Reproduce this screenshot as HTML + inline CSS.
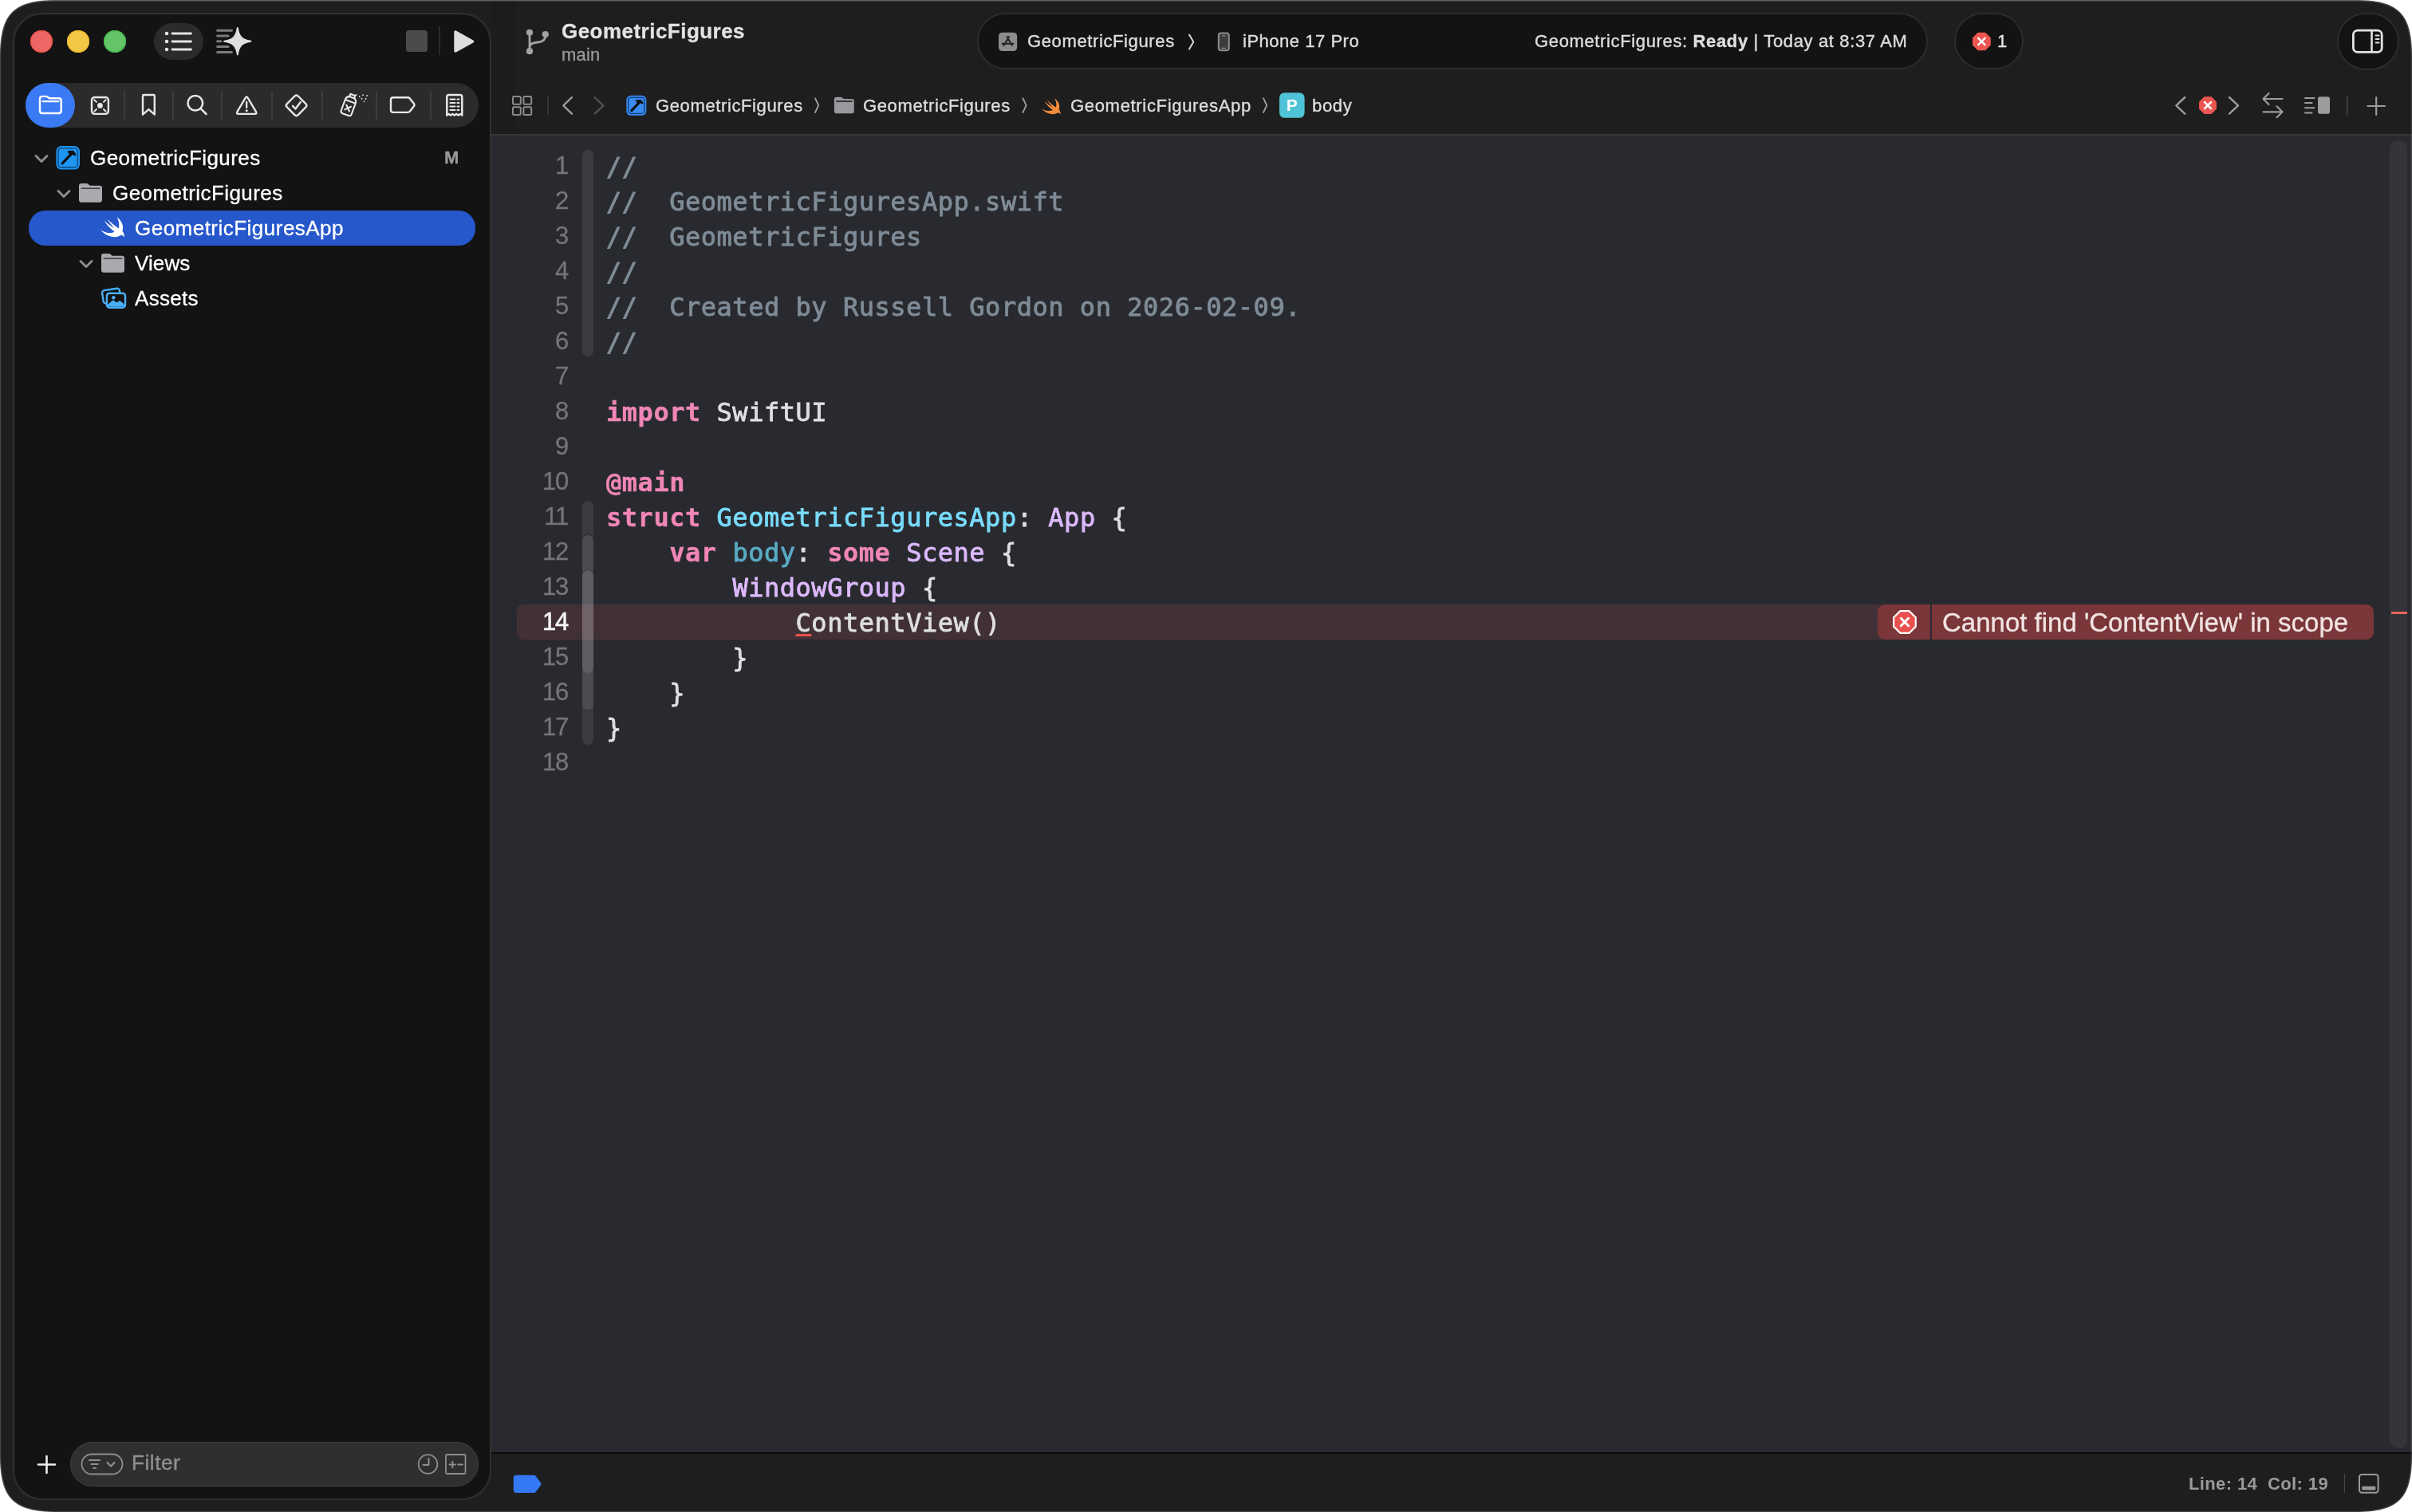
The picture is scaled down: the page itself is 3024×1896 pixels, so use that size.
<!DOCTYPE html>
<html lang="en">
<head>
<meta charset="utf-8">
<title>GeometricFigures — GeometricFiguresApp.swift</title>
<style>
*{box-sizing:border-box;margin:0;padding:0}
html,body{width:3024px;height:1896px;overflow:hidden;background:#fff}
body{font-family:"Liberation Sans",sans-serif;color:#fff;position:relative}
#win>*{position:absolute}
#win{position:absolute;left:0;top:0;width:3024px;height:1896px;background:#1e1e1e;overflow:hidden;clip-path:path('M72 0H2952C3007.4 0 3024 16.6 3024 72V1824C3024 1879.4 3007.4 1896 2952 1896H72C16.6 1896 0 1879.4 0 1824V72C0 16.6 16.6 0 72 0Z')}
svg{overflow:visible}
.t{white-space:pre;line-height:40px;height:40px;-webkit-text-stroke:.3px}
.t,.cl,.ln{will-change:transform}
/* sidebar */
#side{left:16px;top:16px;width:600px;height:1865px;border-radius:37px;background:#131313;border:2px solid #303030}
#sideshadow{left:616px;top:0;width:30px;height:1821px;background:rgba(0,0,0,.05)}
/* editor */
#edline{left:616px;top:168px;width:2408px;height:2px;background:#363637}
#editor{left:616px;top:170px;width:2408px;height:1651px;background:#292a2f}
#edbot{left:616px;top:1821px;width:2408px;height:2px;background:#0c0c0c}
.ln{-webkit-text-stroke:.3px;font-family:"Liberation Sans",sans-serif;font-size:31px;letter-spacing:-1.25px;color:#74747a;text-align:right;width:80px;left:632.4px;height:44px;line-height:44px;white-space:pre}
.cl{font-family:"DejaVu Sans Mono","Liberation Mono",monospace;font-size:32px;letter-spacing:.53px;left:760px;height:44px;line-height:44px;white-space:pre;color:#dfdfe0;-webkit-text-stroke:.85px}
.c{color:#7f8c98}.k{color:#f086b8;font-weight:bold;-webkit-text-stroke:.35px}.d{color:#78dcfc}.o{color:#5aaac6}.y{color:#dcb9fc}
.ln.cur{color:#f4f4f4;-webkit-text-stroke:.5px}
.u{text-decoration:underline;text-decoration-color:#e8504d;text-decoration-thickness:2.500px;text-underline-offset:2.5px}
.rib{left:730px;width:14px;border-radius:7px}
.pill{border-radius:40px;background:#131313;border:2px solid #2c2c2c}
.jb{font-size:22px;letter-spacing:.62px;color:#dcdcdc;top:112.7px;-webkit-text-stroke:.38px}
.st{font-size:22px;letter-spacing:.62px;color:#dedede;top:32.3px;-webkit-text-stroke:.38px}
.nd{top:114px;width:1.5px;height:36px;background:#3d3d3d}
.row{font-size:26px;letter-spacing:.44px;color:#fff}
</style>
</head>
<body>
<div id="win">

<!-- ======= TOOLBAR (right of sidebar) ======= -->
<div id="sideshadow"></div>
<div id="toolbar" style="left:616px;top:0;width:2408px;height:168px"></div>
<!-- branch + title -->
<svg style="left:656px;top:34px" width="36" height="38" viewBox="656 34 36 38" fill="none" stroke="#a2a2a2" stroke-width="2.800" stroke-linecap="round"><path d="M664 41V64M683.800 44Q683.800 51.500 676.500 52.600L670.500 53.500Q664 54.500 664 60"/><g fill="#a2a2a2" stroke="none"><circle cx="664" cy="40.800" r="4.100"/><circle cx="664" cy="64.200" r="4.100"/><circle cx="683.800" cy="43" r="4.100"/></g></svg>
<div class="t" style="left:704px;top:19px;font-size:26px;font-weight:700;letter-spacing:.47px;color:#e2e2e2">GeometricFigures</div>
<div class="t" style="left:704px;top:48.6px;font-size:22px;letter-spacing:.2px;color:#9a9a9a">main</div>

<!-- status pill -->
<div class="pill" style="left:1225px;top:16px;width:1192px;height:71px"></div>
<svg style="left:1250px;top:38px" width="300" height="30" viewBox="1250 38 300 30" fill="none">
<rect x="1252" y="40.800" width="23.200" height="23.200" rx="4.500" fill="#8c8c8c"/>
<g stroke="#1f1f1f" stroke-width="1.900" stroke-linecap="round"><path d="M1262.600 46L1268.800 57M1265 46L1258.500 57M1256.600 54.800H1270.600"/></g>
<path d="M1491 43.500L1496.300 52.500L1491 61.500" stroke="#d6d6d6" stroke-width="2" stroke-linecap="round" stroke-linejoin="round"/>
<rect x="1527.800" y="41.500" width="13" height="21.800" rx="3" fill="#3c3c3c" stroke="#8c8c8c" stroke-width="2"/><path d="M1532.500 44.800H1536M1532 60.300H1536.500" stroke="#8c8c8c" stroke-width="1.300" stroke-linecap="round"/>
</svg>
<div class="t st" style="left:1288px">GeometricFigures</div>
<div class="t st" style="left:1557.500px;letter-spacing:.52px">iPhone 17 Pro</div>
<div class="t st" style="left:1923.500px;letter-spacing:.64px"><span>GeometricFigures: </span><b>Ready</b><span> | Today at 8:37 AM</span></div>

<!-- error count pill -->
<div class="pill" style="left:2450px;top:16px;width:87px;height:71px"></div>
<svg style="left:2470px;top:38px" width="30" height="30" viewBox="2470 38 30 30"><path d="M2479.900 41.300H2488.900L2495.200 47.600V56.400L2488.900 62.700H2479.900L2473.600 56.400V47.600Z" fill="#ec5550" stroke="#ec5550" stroke-width="1.200" stroke-linejoin="round"/><path d="M2480.300 47.900L2488.500 56.100M2488.500 47.900L2480.300 56.100" stroke="#fff" stroke-width="2.500" stroke-linecap="round"/></svg>
<div class="t st" style="left:2504px;color:#e6e6e6">1</div>

<!-- inspector toggle -->
<div class="pill" style="left:2930px;top:16px;width:78px;height:72px"></div>
<svg style="left:2946px;top:34px" width="44" height="36" viewBox="2946 34 44 36" fill="none" stroke="#e2e2e2" stroke-width="2.800" stroke-linecap="round"><rect x="2950.400" y="38.200" width="35.800" height="27.200" rx="5.500"/><path d="M2973.500 38.500V65" stroke-width="2.600"/><path d="M2978.600 44.500H2982.600M2978.600 49H2982.600M2978.600 53.500H2982.600" stroke-width="1.900"/></svg>

<!-- ======= JUMP BAR ======= -->
<svg style="left:636px;top:112px" width="1080" height="42" viewBox="636 112 1080 42" fill="none" stroke-linecap="round" stroke-linejoin="round">
<g stroke="#8b8b8b" stroke-width="2"><rect x="643" y="121" width="9.800" height="9.800" rx="1.500"/><rect x="656.400" y="121" width="9.800" height="9.800" rx="1.500"/><rect x="643" y="134.200" width="9.800" height="9.800" rx="1.500"/><rect x="656.400" y="134.200" width="9.800" height="9.800" rx="1.500"/></g>
<path d="M687 120.500V143.500" stroke="#3a3a3a" stroke-width="1.600"/>
<path d="M717 122L706.300 132.300L717 142.600" stroke="#9c9c9c" stroke-width="2.400"/>
<path d="M745.600 122L756.300 132.300L745.600 142.600" stroke="#4f4f4f" stroke-width="2.400"/>
<!-- project icon -->
<rect x="785.300" y="119.800" width="25" height="25" rx="5.500" fill="#3a8cf3" stroke="none"/><rect x="787.700" y="122.200" width="20.200" height="20.200" rx="3.500" stroke="#123e7a" stroke-width="1.400"/>
<path d="M791.800 138.600L800.600 129.400" stroke="#111" stroke-width="3"/><path d="M797.300 125.800L802.700 125.400Q804 125.500 804.600 126.500L806.300 129.600L804.200 130.200L802.700 128.400L800.600 131Z" fill="#111" stroke="#111" stroke-width=".8"/>
<!-- separators -->
<g stroke="#a4a4a4" stroke-width="1.800"><path d="M1022 123.200L1026.200 132.100L1022 141"/><path d="M1282.400 123.200L1286.600 132.100L1282.400 141"/><path d="M1584 123.200L1588.200 132.100L1584 141"/></g>
<!-- folder -->
<g><path fill="#98989d" stroke="none" d="M1045.9 124.37Q1045.9 121.8 1048.47 121.8H1053.88Q1055.17 121.8 1056.02 122.66L1056.71 123.34Q1057.48 124.03 1058.77 124.03H1068.21Q1070.78 124.03 1070.78 126.6V139.56Q1070.78 142.13 1068.21 142.13H1048.47Q1045.9 142.13 1045.9 139.56Z"/><path d="M1048.22 127.03H1068.47" stroke="#1e1e1e" stroke-width="1.6" stroke-linecap="butt"/></g>
<!-- swift -->
<path transform="translate(1306.300 122) scale(1.040)" fill="#f08a3c" stroke="none" d="M15.300 1.200C19.800 4.400 22.300 9.800 20.600 14.600C22.400 17 22.700 19.300 22.300 20.600C21 18.300 19.100 18.500 17.700 19.200C13.500 21.400 7.300 20.600 2.200 16.200C1.300 15.400 0.500 14.500 0 13.600C2.600 15.300 5.600 16.500 8.700 16.400C10.200 16.400 11.700 16.100 13 15.400C9 12.400 5.600 8.600 2.900 4.700C6 7.400 9.400 9.900 12.900 12C10.500 9.400 7.900 6.300 5.900 3.200C9.200 6.300 13.100 9.600 17 12.100C17.900 8.700 17.300 4.700 15.300 1.200Z"/>
<!-- P badge -->
<rect x="1604" y="116.200" width="31.600" height="31.600" rx="6.500" fill="#50c3d8" stroke="none"/>
</svg>
<div class="t" style="left:1604px;top:112px;width:31.600px;text-align:center;font-size:21px;font-weight:700;-webkit-text-stroke:0;color:#fff">P</div>
<div class="t jb" style="left:821.800px">GeometricFigures</div>
<div class="t jb" style="left:1081.800px">GeometricFigures</div>
<div class="t jb" style="left:1341.800px;letter-spacing:.68px">GeometricFiguresApp</div>
<div class="t jb" style="left:1644.500px;letter-spacing:.7px">body</div>

<!-- jump bar right -->
<svg style="left:2716px;top:110px" width="290" height="44" viewBox="2716 110 290 44" fill="none" stroke="#9c9c9c" stroke-width="2.400" stroke-linecap="round" stroke-linejoin="round">
<path d="M2739.300 122L2728.300 132.300L2739.300 142.600"/><path d="M2795 122L2806 132.300L2795 142.600"/>
<path d="M2763.700 121.800H2772.300L2778.300 127.800V136.400L2772.300 142.400H2763.700L2757.700 136.400V127.800Z" fill="#ec5550" stroke="#ec5550" stroke-width="1.200"/><path d="M2764 128.100L2772 136.100M2772 128.100L2764 136.100" stroke="#fff" stroke-width="2.600"/>
<g stroke-width="2.200"><path d="M2861.500 124H2837.500M2844.500 117L2837.500 124L2844.500 131"/><path d="M2837.500 140.300H2861.500M2854.500 133.300L2861.500 140.300L2854.500 147.300"/></g>
<g stroke-width="2"><path d="M2890 123H2901.500M2890 129H2898.500M2890 135.300H2901.500M2890 141.500H2898.500"/></g><rect x="2906" y="121.300" width="15" height="21.400" rx="2.800" fill="#9c9c9c" stroke="none"/>
<path d="M2942.700 120.500V144" stroke="#454545" stroke-width="1.600"/>
<path d="M2968.500 133H2990M2979.200 122V144" stroke-width="2.200"/>
</svg>

<!-- ======= EDITOR ======= -->
<div id="edline"></div>
<div id="editor"></div>
<div id="edbot"></div>
<!-- line 14 highlight + issue -->
<div style="left:648px;top:758px;width:2320px;height:44px;border-radius:8px 0 0 8px;background:#413136"></div>
<!-- fold ribbons -->
<div class="rib" style="top:188px;height:259px;background:#3b3c41"></div>
<div class="rib" style="top:628px;height:306px;background:#3b3c41"></div>
<div class="rib" style="top:671px;height:219px;background:#4c4d52;box-shadow:0 -1.500px 0 0 #2f3035"></div>
<div class="rib" style="top:715px;height:129px;background:#5d5e63;box-shadow:0 -1.500px 0 0 #3a3b40"></div>
<div style="left:730px;top:758px;width:14px;height:44px;background:#70646a"></div>
<div class="ln" style="top:185.6px">1</div><div class="cl" style="top:187px"><span class="c">//</span></div>
<div class="ln" style="top:229.6px">2</div><div class="cl" style="top:231px"><span class="c">//  GeometricFiguresApp.swift</span></div>
<div class="ln" style="top:273.6px">3</div><div class="cl" style="top:275px"><span class="c">//  GeometricFigures</span></div>
<div class="ln" style="top:317.6px">4</div><div class="cl" style="top:319px"><span class="c">//</span></div>
<div class="ln" style="top:361.6px">5</div><div class="cl" style="top:363px"><span class="c">//  Created by Russell Gordon on 2026-02-09.</span></div>
<div class="ln" style="top:405.6px">6</div><div class="cl" style="top:407px"><span class="c">//</span></div>
<div class="ln" style="top:449.6px">7</div><div class="cl" style="top:451px"></div>
<div class="ln" style="top:493.6px">8</div><div class="cl" style="top:495px"><span class="k">import</span> SwiftUI</div>
<div class="ln" style="top:537.6px">9</div><div class="cl" style="top:539px"></div>
<div class="ln" style="top:581.6px">10</div><div class="cl" style="top:583px"><span class="k">@main</span></div>
<div class="ln" style="top:625.6px">11</div><div class="cl" style="top:627px"><span class="k">struct</span> <span class="d">GeometricFiguresApp</span>: <span class="y">App</span> {</div>
<div class="ln" style="top:669.6px">12</div><div class="cl" style="top:671px">    <span class="k">var</span> <span class="o">body</span>: <span class="k">some</span> <span class="y">Scene</span> {</div>
<div class="ln" style="top:713.6px">13</div><div class="cl" style="top:715px">        <span class="y">WindowGroup</span> {</div>
<div class="ln cur" style="top:757.6px">14</div><div class="cl" style="top:759px">            <span class="u">C</span>ontentView()</div>
<div class="ln" style="top:801.6px">15</div><div class="cl" style="top:803px">        }</div>
<div class="ln" style="top:845.6px">16</div><div class="cl" style="top:847px">    }</div>
<div class="ln" style="top:889.6px">17</div><div class="cl" style="top:891px">}</div>
<div class="ln" style="top:933.6px">18</div><div class="cl" style="top:935px"></div>
<!-- issue badge -->
<div style="left:2354px;top:758px;width:622px;height:44px;border-radius:9px;background:#7a3638"></div>
<div style="left:2420px;top:758px;width:2px;height:44px;background:#2a2a30"></div>
<svg style="left:2370px;top:762px" width="36" height="36" viewBox="2370 762 36 36"><path d="M2382.300 766.200H2393.700L2401.800 774.300V785.700L2393.700 793.800H2382.300L2374.200 785.700V774.300Z" fill="#e9514f" stroke="#fff" stroke-width="2.200" stroke-linejoin="round"/><path d="M2383.300 775.300L2392.700 784.700M2392.700 775.300L2383.300 784.700" stroke="#fff" stroke-width="3" stroke-linecap="round"/></svg>
<div class="t" style="left:2435px;top:760.5px;font-size:33px;color:#f1e3e3;letter-spacing:0">Cannot find 'ContentView' in scope</div>
<!-- scroller -->
<div style="left:2996px;top:176px;width:22px;height:1640px;border-radius:11px;background:#34353a"></div>
<div style="left:2998px;top:767px;width:20px;height:3px;background:#e7665c"></div>

<!-- ======= bottom bar ======= -->
<svg style="left:640px;top:1846px" width="44" height="30" viewBox="640 1846 44 30"><path d="M647.200 1849.800H669.300Q670.800 1849.800 671.700 1851L678 1859.400Q679 1860.900 678 1862.400L671.700 1870.800Q670.800 1872 669.300 1872H647.200Q643.800 1872 643.800 1868.600V1853.200Q643.800 1849.800 647.200 1849.800Z" fill="#3478f6"/></svg>
<div class="t" style="left:2744px;top:1840.5px;font-size:22px;font-weight:700;letter-spacing:.37px;-webkit-text-stroke:0;color:#9a9a9a">Line: 14  Col: 19</div>
<div style="left:2938.500px;top:1848px;width:1.600px;height:24px;background:#484848"></div>
<svg style="left:2954px;top:1844px" width="32" height="32" viewBox="2954 1844 32 32" fill="none"><rect x="2958" y="1849" width="23.600" height="22.800" rx="3.200" stroke="#9a9a9a" stroke-width="2"/><rect x="2961.300" y="1863.800" width="17" height="4.800" rx="1" fill="#9a9a9a"/></svg>


<!-- ======= SIDEBAR ======= -->
<div id="side"></div>

<!-- traffic lights -->
<div style="left:38px;top:38px;width:28px;height:28px;border-radius:50%;background:#ec6765;box-shadow:inset 0 0 0 1.200px #ee4f49"></div>
<div style="left:84px;top:38px;width:28px;height:28px;border-radius:50%;background:#f3c846;box-shadow:inset 0 0 0 1.200px #ecb928"></div>
<div style="left:130px;top:38px;width:28px;height:28px;border-radius:50%;background:#63c567;box-shadow:inset 0 0 0 1.200px #40b649"></div>

<!-- list button -->
<div style="left:193px;top:29px;width:62px;height:46px;border-radius:23px;background:#2b2b2b"></div>
<svg style="left:193px;top:29px" width="62" height="46" viewBox="193 29 62 46" fill="none" stroke="#e4e4e4" stroke-width="2.8" stroke-linecap="round">
<path d="M216 42H239.5M216 52H239.5M216 62H239.5"/>
<g fill="#e4e4e4" stroke="none"><circle cx="209" cy="42" r="2.3"/><circle cx="209" cy="52" r="2.3"/><circle cx="209" cy="62" r="2.3"/></g>
</svg>
<!-- sparkle list -->
<svg style="left:268px;top:30px" width="52" height="44" viewBox="268 30 52 44" fill="none">
<path d="M272.600 38.300H290.500M272.600 44.900H286.100M272.600 51.700H276.700M272.600 58.500H286.100M272.600 65.400H290.500" stroke="#7c7c7c" stroke-width="3" stroke-linecap="round"/>
<path transform="translate(297.800 51.700)" d="M0 -16.700C1.700 -5.400 5.400 -1.700 16.700 0C5.400 1.700 1.700 5.400 0 16.700C-1.700 5.400 -5.400 1.700 -16.700 0C-5.400 -1.700 -1.700 -5.400 0 -16.700Z" fill="#dedede" stroke="#dedede" stroke-width="2" stroke-linejoin="round"/>
</svg>
<!-- stop / play -->
<div style="left:509px;top:38px;width:27px;height:27px;border-radius:3.5px;background:#4b4b4b"></div>
<div style="left:550px;top:33px;width:1.5px;height:36px;background:#2b2b2b"></div>
<svg style="left:566px;top:34px" width="32" height="36" viewBox="566 34 32 36"><path d="M571 40V64L592.5 52Z" fill="#dedede" stroke="#dedede" stroke-width="3.4" stroke-linejoin="round"/></svg>

<!-- navigator selector -->
<div style="left:32px;top:104px;width:568px;height:56px;border-radius:28px;background:#2b2b2b"></div>
<div style="left:32px;top:104px;width:62px;height:56px;border-radius:28px;background:#3a7bf5"></div>
<div class="nd" style="left:155px"></div><div class="nd" style="left:216px"></div><div class="nd" style="left:277px"></div><div class="nd" style="left:340px"></div><div class="nd" style="left:403px"></div><div class="nd" style="left:471px"></div><div class="nd" style="left:539px"></div>
<svg style="left:32px;top:104px" width="568" height="56" viewBox="32 104 568 56" fill="none" stroke="#e8e8e8" stroke-width="2.5" stroke-linecap="round" stroke-linejoin="round">
<!-- folder -->
<g stroke="#fff" stroke-width="2.400"><path d="M50 125.400V139Q50 142 53 142H73.700Q76.700 142 76.700 139V126.200Q76.700 123.200 73.700 123.200H61.800L59.400 121.500Q58.500 120.900 57.300 120.900H53Q50 120.900 50 123.900Z"/><path d="M53.400 127.100H73.400" stroke-width="2.200"/></g>
<!-- x square -->
<rect x="115" y="122" width="20.900" height="20.900" rx="3.600" stroke-width="2.400"/><path d="M118.300 125.300L120.900 127.900M132.600 125.300L130 127.900M118.300 139.600L120.900 137M132.600 139.600L130 137" stroke-width="2"/><circle cx="125.450" cy="132.450" r="3.400" fill="#e8e8e8" stroke="none"/>
<!-- bookmark -->
<path d="M180.200 119H192.600Q193.800 119 193.800 120.200V143.600L186.400 137.100L179 143.600V120.200Q179 119 180.200 119Z" stroke-width="2.400"/>
<!-- search -->
<circle cx="244.800" cy="129.300" r="9.300"/><path d="M251.800 136.300L258.500 143"/>
<!-- warning -->
<g stroke-width="2.300"><path d="M307.800 122.600Q309.200 120.200 310.600 122.600L321 140.200Q322.400 142.800 319.600 142.800H298.800Q296 142.800 297.400 140.200Z"/><path d="M309.200 128V135"/></g><circle cx="309.200" cy="138.700" r="1.500" fill="#e8e8e8" stroke="none"/>
<!-- diamond check -->
<g stroke-width="2.400"><path d="M369.500 120.500Q371.600 118.400 373.700 120.500L383.400 130.200Q385.500 132.300 383.400 134.400L373.700 144.100Q371.600 146.200 369.500 144.100L359.800 134.400Q357.700 132.300 359.800 130.200Z"/><path d="M367 132.800L370.400 136.500L376.800 128"/></g>
<!-- spray -->
<g stroke-width="2.100" transform="translate(437.900 130.900) rotate(20)"><path d="M-6.900 -3.500V10.800Q-6.900 13.500 -4.200 13.500H4.200Q6.900 13.500 6.900 10.800V-3.500Q6.900 -7.500 3.700 -9.300H-3.700Q-6.900 -7.500 -6.900 -3.500Z"/><path d="M-6.700 -3.800H6.700"/><path d="M-3.200 -9.500V-12.800H3.200V-9.500"/><path d="M-3 2L3 8M3 2L-3 8"/></g>
<g fill="#e8e8e8" stroke="none"><circle cx="446.500" cy="118.900" r="1"/><circle cx="450.700" cy="120.900" r=".9"/><circle cx="455" cy="119.200" r=".9"/><circle cx="460" cy="120" r=".9"/><circle cx="453.600" cy="123.700" r=".9"/><circle cx="458.600" cy="124" r=".9"/><circle cx="456.500" cy="127.300" r=".9"/></g>
<!-- tag -->
<path d="M492.800 122.300H511.300Q512.800 122.300 513.800 123.400L519 130.100Q520 131.600 519 133.100L513.800 139.800Q512.800 140.900 511.300 140.900H492.800Q490 140.900 490 138.100V125.100Q490 122.300 492.800 122.300Z" stroke-width="2.400"/>
<!-- report -->
<path d="M560.300 144.500V121.500Q560.300 119 562.800 119H576.800Q579.300 119 579.300 121.500V144.500L577 143L574.600 144.500L572.200 143L569.800 144.500L567.400 143L565 144.500L562.600 143Z"/><g stroke-width="2"><path d="M564.500 124.500H570.500M573.500 124.500H575.500M564.500 129H570.500M573.500 129H575.500M564.500 133.500H570.500M573.500 133.500H575.500M564.500 138H570.500M573.500 138H575.500"/></g>
</svg>

<!-- ======= project tree ======= -->
<div style="left:36px;top:264px;width:560px;height:44px;border-radius:21px;background:#2658cc"></div>
<svg style="left:16px;top:176px" width="600" height="220" viewBox="16 176 600 220" fill="none">
<!-- chevrons -->
<g stroke="#8c8c8c" stroke-width="3" stroke-linecap="round" stroke-linejoin="round"><path d="M45 195.500L52 202.500L59 195.500"/><path d="M73 239.500L80 246.500L87 239.500"/><path d="M101 327.500L108 334.500L115 327.500"/></g>
<!-- project icon -->
<rect x="70.400" y="183" width="29.600" height="29.600" rx="6.500" fill="#1d95f2"/><rect x="73.100" y="185.700" width="24.200" height="24.200" rx="4.200" stroke="#0c4f86" stroke-width="1.600"/>
<g><path d="M78.200 204.800L88.600 193.800" stroke="#111" stroke-width="3.200" stroke-linecap="round"/><path d="M85 189.800L90.800 189.200Q92.300 189.300 93.100 190.500L95 194.200L92.700 194.900L91 192.900L88.800 195.800Z" fill="#111" stroke="#111" stroke-width="1" stroke-linejoin="round"/></g>
<!-- folder 1 -->
<g><path fill="#a9a9ae" stroke="none" d="M99 233.1Q99 230.1 102 230.1H108.3Q109.8 230.1 110.8 231.1L111.6 231.9Q112.5 232.7 114 232.7H125Q128 232.7 128 235.7V250.8Q128 253.8 125 253.8H102Q99 253.8 99 250.8Z"/><path d="M101.7 236.2H125.3" stroke="#3c3c40" stroke-width="1.5" stroke-linecap="butt"/></g>
<!-- folder 2 -->
<g><path fill="#a9a9ae" stroke="none" d="M127 321.1Q127 318.1 130 318.1H136.3Q137.8 318.1 138.8 319.1L139.6 319.9Q140.5 320.7 142 320.7H153Q156 320.7 156 323.7V338.8Q156 341.8 153 341.8H130Q127 341.8 127 338.8Z"/><path d="M129.7 324.2H153.3" stroke="#3c3c40" stroke-width="1.5" stroke-linecap="butt"/></g>
<!-- swift bird -->
<path transform="translate(126.700 270.700) scale(1.300)" fill="#fff" d="M15.300 1.200C19.800 4.400 22.300 9.800 20.600 14.600C22.400 17 22.700 19.300 22.300 20.600C21 18.300 19.100 18.500 17.700 19.200C13.500 21.400 7.300 20.600 2.200 16.200C1.300 15.400 0.500 14.500 0 13.600C2.600 15.300 5.600 16.500 8.700 16.400C10.200 16.400 11.700 16.100 13 15.400C9 12.400 5.600 8.600 2.900 4.700C6 7.400 9.400 9.900 12.900 12C10.500 9.400 7.900 6.300 5.900 3.200C9.200 6.300 13.100 9.600 17 12.100C17.900 8.700 17.300 4.700 15.300 1.200Z"/>
<!-- assets -->
<g stroke="#49b0f8" stroke-width="2.400" stroke-linejoin="round"><rect x="0" y="0" width="22" height="16.500" rx="3" transform="translate(127.600 364.600) rotate(-8.800)"/><rect x="133.900" y="367.700" width="23.100" height="18" rx="3.200" fill="#131313"/></g>
<path d="M135.100 384.500V381.800L140.600 377.200Q142 376 143.400 377.200L146.200 379.600L148.600 377.700Q150 376.600 151.400 377.800L155.800 381.500V384.500Z" fill="#49b0f8"/><circle cx="142.300" cy="373.200" r="2.200" fill="#49b0f8"/>
</svg>
<div class="t row" style="left:113px;top:178px">GeometricFigures</div>
<div class="t" style="left:557px;top:178px;font-size:22px;font-weight:700;color:#9b9b9b">M</div>
<div class="t row" style="left:141px;top:222px">GeometricFigures</div>
<div class="t row" style="left:169px;top:266px;letter-spacing:.48px">GeometricFiguresApp</div>
<div class="t row" style="left:169px;top:310px;letter-spacing:.1px">Views</div>
<div class="t row" style="left:169px;top:354px;letter-spacing:.3px">Assets</div>

<!-- ======= filter bar ======= -->
<svg style="left:44px;top:1822px" width="30" height="30" viewBox="44 1822 30 30" fill="none" stroke="#f0f0f0" stroke-width="2.600" stroke-linecap="round"><path d="M48 1836.500H69M58.500 1826V1847"/></svg>
<div style="left:88px;top:1808px;width:512px;height:56px;border-radius:28px;background:#2f2f2f;border:1.500px solid #424242"></div>
<svg style="left:88px;top:1808px" width="512" height="56" viewBox="88 1808 512 56" fill="none" stroke="#8e8e8e" stroke-width="1.800" stroke-linecap="round" stroke-linejoin="round">
<rect x="102.500" y="1823.500" width="51" height="25" rx="12.500"/>
<g stroke-width="2.200"><path d="M112 1831H125M114.500 1836H122.500M117 1841H120"/><path d="M134.500 1834L139 1838.500L143.500 1834"/></g>
<circle cx="536.500" cy="1836" r="11.800"/><path d="M537.500 1829V1837H530.500" stroke-width="2"/>
<rect x="559" y="1824" width="24.500" height="24" rx="1.500"/><g stroke-width="2"><path d="M563.500 1836.500H571M567.300 1832.800V1840.200M574.300 1836.500H580"/></g>
</svg>
<div class="t" style="left:165px;top:1814px;font-size:26px;letter-spacing:.6px;-webkit-text-stroke:.45px;color:#8f8f8f">Filter</div>

<svg id="rim" style="left:0;top:0" width="3024" height="1896" viewBox="0 0 3024 1896" fill="none"><path d="M72 0H2952C3007.4 0 3024 16.6 3024 72V1824C3024 1879.4 3007.4 1896 2952 1896H72C16.6 1896 0 1879.4 0 1824V72C0 16.6 16.6 0 72 0Z" stroke="rgba(255,255,255,.17)" stroke-width="2.400"/><path d="M40 0H2984" stroke="rgba(255,255,255,.16)" stroke-width="3"/></svg>
</div>
</body>
</html>
